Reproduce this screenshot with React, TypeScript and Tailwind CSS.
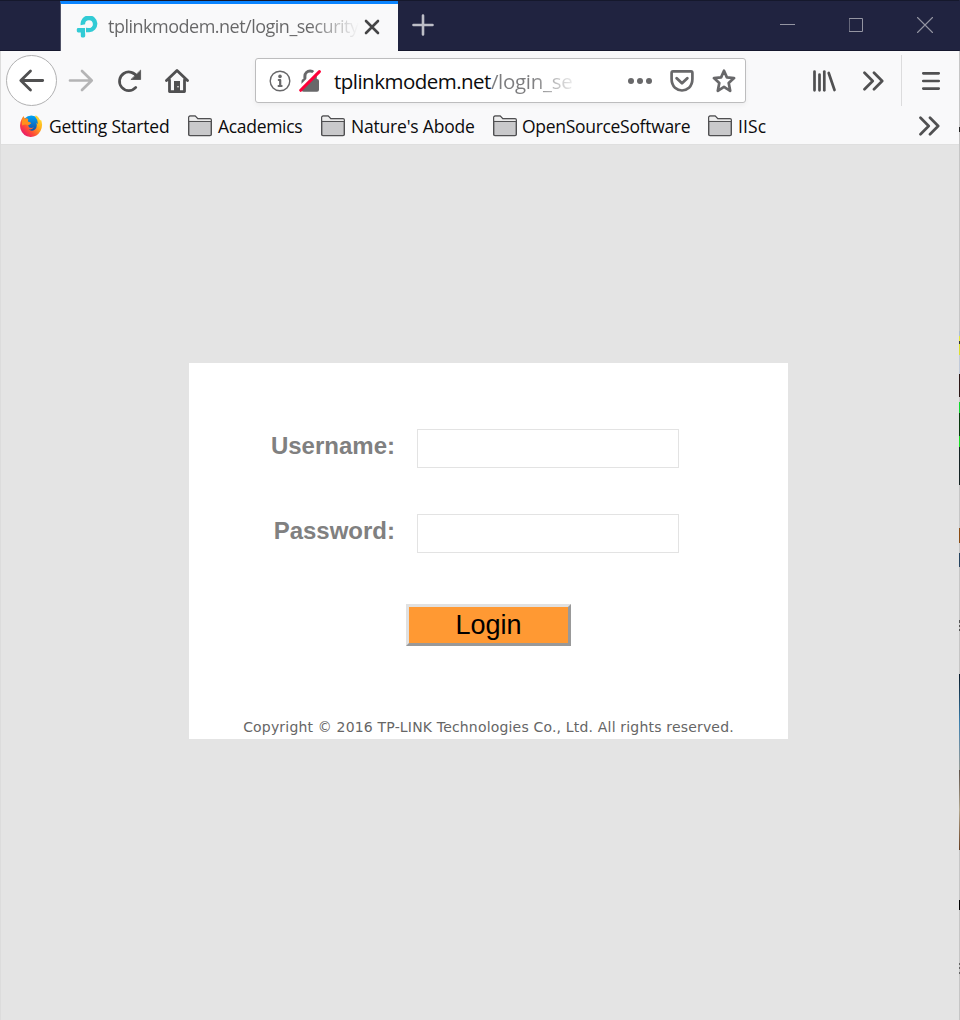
import React from "react";

type IconProps = { box: string; className: string; children: React.ReactNode };

function Icon({ box, className, children }: IconProps) {
  return (
    <svg
      viewBox={box}
      className={`shrink-0 ${className}`}
      fill="none"
      strokeLinecap="round"
      strokeLinejoin="round"
      aria-hidden="true"
    >
      {children}
    </svg>
  );
}

function Folder() {
  return (
    <Icon box="0 0 24 22" className="h-[22px] w-6">
      <path d="M.7 19.5V2.5Q.7 1 2.2 1H7.2L9.8 3.7H22Q23.3 3.7 23.3 5V19.5Q23.3 20.6 22 20.6H2Q.7 20.6.7 19.5Z" fill="#c9c9cb" stroke="#505052" strokeWidth="1.4" />
      <path d="M1.4 5.8V2.2Q1.4 1.7 2.2 1.7H7L9.5 4.4H22.6V6Z" fill="#ededed" />
      <path d="M1 6.5H23" stroke="#505052" />
    </Icon>
  );
}

function Firefox() {
  return (
    <Icon box="0 0 24 24" className="h-6 w-6">
      <defs>
        <linearGradient id="flame" x1="1" y1="0" x2=".1" y2=".9">
          <stop offset="0" stopColor="#fff23d" />
          <stop offset=".38" stopColor="#ffad19" />
          <stop offset=".7" stopColor="#ff4f35" />
          <stop offset="1" stopColor="#e61172" />
        </linearGradient>
        <linearGradient id="globe" x1="0" y1="0" x2="0" y2="1">
          <stop offset="0" stopColor="#00a5f5" />
          <stop offset="1" stopColor="#113e9c" />
        </linearGradient>
      </defs>
      <circle cx="12.3" cy="10.5" r="9" fill="url(#globe)" />
      <path d="M2.6 5.2L4.3 2.2 5.8 4.8Q8 4 9.2 5L8.7 7.5 12 9.1Q11.4 10.5 9.2 10.9L9.9 13.2Q12 14.5 15 13.3Q12.8 16.2 9.6 15.1Q12.4 18 16 15.4Q18.7 13.2 17.3 8.8L18.9 9.9Q19 6 16.2 2.7L16.7 1.2Q20.1 2.8 21.3 6.4L22 5.7Q24.4 11.4 21.5 17Q17.9 23.1 11.4 22.9Q3.8 22.4 1.5 15.1Q.2 9.6 2.6 5.2Z" fill="url(#flame)" />
      <path d="M4.3 2.2L5.8 4.8Q8 4 9.2 5L8.7 7.5 12 9.1Q11.2 10.6 9.2 10.9Q6 9.8 3.1 11.6Q2.4 6 4.3 2.2Z" fill="#ff901d" />
    </Icon>
  );
}

function Chevrons() {
  return (
    <Icon box="0 0 21 20" className="h-5 w-[21px]">
      <path d="M1.5 1.8L9.7 10 1.5 18.2M11 1.8L19.2 10 11 18.2" stroke="#505051" strokeWidth="2.7" />
    </Icon>
  );
}

function TitleBar() {
  return (
    <header className="flex h-[51px] w-full border-t border-[#15182c] bg-[#202340]">
      <div className="w-[60px] border-b border-[#15172d]" />
      <div className="flex w-[338px] border-l border-[#505267] border-t-[3px] border-t-[#0a84ff] bg-[#f9f9fa] pl-[15px]">
        <Icon box="76 16 22 22" className="mt-3 h-[22px] w-[22px]">
          <path d="M80.6 25.2V24.7A8.4 8.4 0 1 1 89.2 32.2H86V27.8H88.9A3.8 3.8 0 1 0 85.2 24.2V36Q85.2 37.4 83.8 37.4H82Q80.8 37.4 80.8 36V32.4H78.2Q76.8 32.4 76.8 31V29.2Q76.8 27.9 78.2 27.9H85.2V24.2" fill="#32cbd5" />
          <circle cx="89" cy="24.6" r="3.4" fill="#f9f9fa" />
          <path d="M85.5 27.5V33" stroke="#f9f9fa" strokeWidth=".8" />
        </Icon>
        <div className="ml-[10px] mt-[8px] w-[251px] whitespace-nowrap bg-gradient-to-r from-[#666667] from-80% to-transparent bg-clip-text text-[18px] leading-[28px] tracking-[-0.5px] text-transparent">
          tplinkmodem.net/login_security
        </div>
        <Icon box="364 19 16 16" className="ml-[5px] mt-[15px] h-4 w-4">
          <path d="M366 21L378 33M378 21L366 33" stroke="#454546" strokeWidth="2.6" />
        </Icon>
      </div>
      <div className="flex flex-1 border-b border-[#15172d] pl-[14px]">
        <Icon box="412 14 22 22" className="mt-[13px] h-[22px] w-[22px]">
          <path d="M423 15.5V34.5M413.5 25H432.5" stroke="#bdbec7" strokeWidth="2.6" />
        </Icon>
        <Icon box="780 16 15 17" className="ml-auto mt-[15px] h-[17px] w-[15px]">
          <path d="M780 24.5H795" stroke="#9495a2" />
        </Icon>
        <Icon box="849 18 14 14" className="ml-[54px] mt-[17px] h-[14px] w-[14px]">
          <path d="M849.5 18.5H862.5V31.5H849.5Z" stroke="#9495a2" strokeLinejoin="miter" />
        </Icon>
        <Icon box="917 17 16 16" className="ml-[54px] mr-[26px] mt-4 h-4 w-4">
          <path d="M917.5 17.5L932.5 32.5M932.5 17.5L917.5 32.5" stroke="#9495a2" strokeWidth="1.1" />
        </Icon>
      </div>
    </header>
  );
}

function UrlBar() {
  return (
    <div className="ml-[65px] mt-[7px] flex h-[45px] w-[491px] items-center rounded-[3px] border border-[#bdbdbe] bg-white pl-[13px] shadow-[0_2px_5px_rgba(0,0,0,0.05)]">
      <Icon box="269 70 22 22" className="h-[22px] w-[22px]">
        <circle cx="280" cy="81" r="9.8" stroke="#68686a" strokeWidth="1.4" />
        <circle cx="280" cy="76.4" r="1.8" fill="#68686a" />
        <path d="M278.8 80H280.2V85.8M278.6 86H281.6" stroke="#68686a" strokeWidth="2.2" />
      </Icon>
      <Icon box="299 69 23 24" className="ml-2 h-6 w-[23px]">
        <path d="M304.9 80V76.3A5.2 5.2 0 0 1 315.3 76.3V80" stroke="#68686a" strokeWidth="3" />
        <rect x="301.5" y="79" width="17.5" height="12.8" rx="2" fill="#68686a" />
        <path d="M299 88.4L318.2 69.2" stroke="#fff" strokeWidth="3" />
        <path d="M300.7 90.3L319.4 71.6" stroke="#ff0039" strokeWidth="3" />
      </Icon>
      <div className="ml-[12px] flex w-[242px] whitespace-nowrap text-[20.5px] leading-[30px] tracking-[-0.52px]">
        <span className="text-[#0c0c0d]">tplinkmodem.net</span>
        <span className="bg-gradient-to-r from-[#7c7c7e] from-50% to-transparent to-110% bg-clip-text tracking-[-0.3px] text-transparent">/login_se</span>
      </div>
      <Icon box="627 75 26 12" className="ml-auto h-3 w-[26px]">
        <g fill="#68686a"><circle cx="631" cy="81" r="3" /><circle cx="640" cy="81" r="3" /><circle cx="649" cy="81" r="3" /></g>
      </Icon>
      <Icon box="669 69 26 24" className="ml-4 h-6 w-[26px]">
        <path d="M673 71.4H691Q692.4 71.4 692.4 73V79Q692.4 84.5 689 87.7Q685.8 90.5 682 90.5Q678.2 90.5 675 87.7Q671.6 84.5 671.6 79V73Q671.6 71.4 673 71.4Z" stroke="#68686a" strokeWidth="2.7" />
        <path d="M676.7 78.3L682 83.2 687.3 78.3" stroke="#68686a" strokeWidth="2.9" />
      </Icon>
      <Icon box="711 68 26 26" className="ml-4 mr-[8px] h-[26px] w-[26px]">
        <path d="M724 70.7L726.9 77.4 734.1 78.1 728.7 83 730.2 90.8 724 86.9 717.8 90.8 719.3 83 713.9 78.1 721.1 77.4Z" stroke="#68686a" strokeWidth="2.7" />
      </Icon>
    </div>
  );
}

function Toolbar() {
  return (
    <nav className="flex h-[57px] items-start pl-[5px]">
      <button aria-label="Back" className="mt-1 flex h-[51px] w-[51px] shrink-0 items-center justify-center rounded-full border border-[#b1b1b2] bg-white">
        <Icon box="18 68 27 25" className="h-[25px] w-[27px]">
          <path d="M30.5 71L20.8 80.5 30.5 90M21 80.5H42.7" stroke="#505051" strokeWidth="2.8" />
        </Icon>
      </button>
      <Icon box="68 68 27 25" className="ml-[11px] mt-[17px] h-[25px] w-[27px]">
        <path d="M82 71L91.7 80.5 82 90M91.5 80.5H70" stroke="#b4b4b5" strokeWidth="2.7" />
      </Icon>
      <Icon box="117 68 26 26" className="ml-[22px] mt-[17px] h-[26px] w-[26px]">
        <path d="M135.8 87.4A9.3 9.3 0 1 1 137.2 77.3" stroke="#505051" strokeWidth="2.7" />
        <path d="M140.6 70.5V79.5H131.3Z" fill="#505051" stroke="#505051" strokeWidth=".8" />
      </Icon>
      <Icon box="165 68 25 26" className="ml-[22px] mt-[17px] h-[26px] w-[25px]">
        <path d="M166.5 80.6L177 70.4 187.5 80.6M169.5 80V91.6H184.5V80" stroke="#505051" strokeWidth="2.8" />
        <rect x="174" y="81" width="6" height="11" fill="#505051" />
        <circle cx="178" cy="86.8" r=".8" fill="#f9f9fa" />
      </Icon>
      <UrlBar />
      <Icon box="812 69 26 24" className="ml-[66px] mt-[18px] h-6 w-[26px]">
        <path d="M814.5 71.5V90.3M819.5 74.5V90.3M828.7 73L834.5 90" stroke="#505051" strokeWidth="2.7" />
        <path d="M824.3 71.5V90.3" stroke="#505051" strokeWidth="2.7" />
      </Icon>
      <div className="ml-[25px] mt-5"><Chevrons /></div>
      <div className="ml-[17px] mt-1 h-[51px] w-px bg-[#dcdcdd]" />
      <Icon box="921 70 20 22" className="ml-[19px] mt-[19px] h-[22px] w-5">
        <path d="M923.3 73.3H938.7M923.3 81H938.7M923.3 88.6H938.7" stroke="#505051" strokeWidth="2.7" />
      </Icon>
    </nav>
  );
}

function Bookmarks() {
  return (
    <div className="flex h-[36px] items-center whitespace-nowrap pl-[18px] text-[17.5px] leading-[26px] text-[#0c0c0d]">
      <div className="flex w-[169px] items-center gap-[6px]"><Firefox /><span className="tracking-[-0.22px]">Getting Started</span></div>
      <div className="flex w-[133px] items-center gap-[6px]"><Folder /><span className="tracking-[-0.3px]">Academics</span></div>
      <div className="flex w-[172px] items-center gap-[6px]"><Folder /><span className="tracking-[-0.2px]">Nature's Abode</span></div>
      <div className="flex w-[215px] items-center gap-[5px]"><Folder /><span className="tracking-[-0.3px]">OpenSourceSoftware</span></div>
      <div className="flex items-center gap-[6px]"><Folder /><span className="tracking-[0.1px]">IISc</span></div>
      <div className="ml-auto mr-[19px]"><Chevrons /></div>
    </div>
  );
}

function Field({ label, type }: { label: string; type: string }) {
  return (
    <label className="flex h-[39px]">
      <span className="w-[206px] pt-[2px] text-right font-['Liberation_Sans',Arial,sans-serif] text-[24px] font-bold leading-[30px] text-[#808080]">{label}</span>
      <input type={type} className="ml-[22px] h-[39px] w-[262px] border border-[#e3e3e3] bg-white px-2 outline-none" />
    </label>
  );
}

function LoginPanel() {
  return (
    <main className="ml-[188px] mt-[218px] flex h-[376px] w-[599px] flex-col bg-white pt-[66px]">
      <Field label="Username:" type="text" />
      <div className="h-[46px]" />
      <Field label="Password:" type="password" />
      <button className="ml-[217px] mt-[51px] h-[42px] w-[165px] border-[3px] border-b-[#999] border-l-[#e1e1e1] border-r-[#999] border-t-[#e1e1e1] bg-[#ff9933] font-['Liberation_Sans',Arial,sans-serif] text-[27px] leading-[34px] text-black">
        Login
      </button>
      <p className="mt-[71px] text-center font-['DejaVu_Sans',Verdana,sans-serif] text-[14px] leading-[20px] tracking-[0.18px] text-[#666]">
        Copyright © 2016 TP-LINK Technologies Co., Ltd. All rights reserved.
      </p>
    </main>
  );
}

function WindowEdge() {
  return (
    <div className="flex w-px flex-col bg-[#c6c6c6]">
      <div className="h-[51px] bg-[#202340]" />
      <div className="mt-[76px] h-[5px] bg-[#222]" />
      <div className="mt-[199px] h-[5px] bg-[#adbfd1]" />
      <div className="h-[5px] bg-[#e8e83a]" />
      <div className="h-[3px] bg-[#333]" />
      <div className="h-[11px] bg-[#dce02c]" />
      <div className="h-[19px] bg-[#c1cad9]" />
      <div className="h-[23px] bg-[#2b1715]" />
      <div className="h-[5px] bg-[#ccc]" />
      <div className="h-[11px] bg-[#12d82c]" />
      <div className="h-[23px] bg-[#07370d]" />
      <div className="h-[11px] bg-[#19df22]" />
      <div className="h-[38px] bg-[#142322]" />
      <div className="mt-[43px] h-[15px] bg-[#8b4b12]" />
      <div className="mt-[10px] h-[14px] bg-[#25435f]" />
      <div className="mt-[53px] h-[3px] bg-[#555]" />
      <div className="mt-[2px] h-[2px] bg-[#555]" />
      <div className="mt-[2px] h-[2px] bg-[#555]" />
      <div className="mt-[43px] h-[96px] bg-gradient-to-b from-[#071b2a] via-[#3a80b0] to-[#999c95]" />
      <div className="h-[80px] bg-gradient-to-b from-[#5e5149] via-[#b6aa90] to-[#653c1e]" />
      <div className="mt-[50px] h-[10px] bg-black" />
      <div className="mt-[53px] h-[2px] bg-[#666]" />
      <div className="mt-[2px] h-[2px] bg-[#666]" />
      <div className="mt-[3px] h-[2px] bg-[#666]" />
    </div>
  );
}

export default function App() {
  return (
    <div className="flex h-[1020px] w-[960px] overflow-hidden bg-[#e4e4e4] font-['Open_Sans','Noto_Sans',sans-serif]">
      <div className="flex w-[959px] shrink-0 flex-col">
        <TitleBar />
        <div className="flex flex-1 flex-col border-l border-[#dcdcdc]">
          <div className="h-[94px] border-b border-[#dfdfdf] bg-[#f9f9fa]">
            <Toolbar />
            <Bookmarks />
          </div>
          <LoginPanel />
        </div>
      </div>
      <WindowEdge />
    </div>
  );
}
